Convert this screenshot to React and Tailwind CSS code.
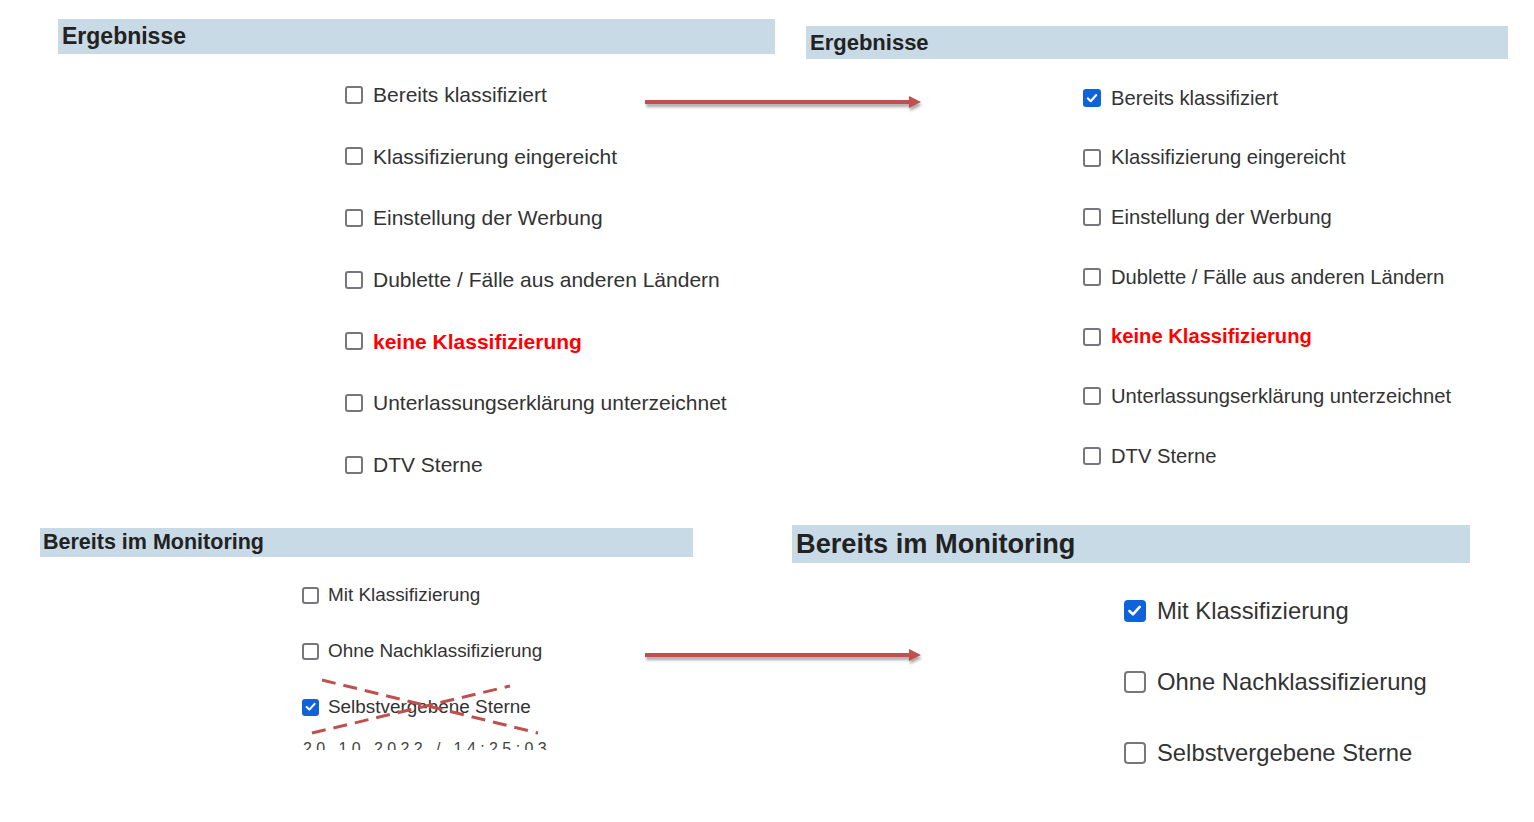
import React from "react";

const font = { fontFamily: '"Liberation Sans", Arial, sans-serif' };

const Checkbox = ({ checked, size }) => {
  // size: box edge in px
  const cls =
    size === "lg"
      ? "w-[22px] h-[22px] rounded-[4px]"
      : size === "sm"
      ? "w-[17px] h-[17px] rounded-[3px]"
      : "w-[18px] h-[18px] rounded-[3px]";
  if (checked) {
    return (
      <span className={`${cls} shrink-0 bg-[#0f62d8] flex items-center justify-center`}>
        <svg viewBox="0 0 16 16" className="w-[78%] h-[78%]">
          <path
            d="M3.2 8.4 L6.5 11.6 L12.8 4.6"
            fill="none"
            stroke="white"
            strokeWidth="2.4"
            strokeLinecap="round"
            strokeLinejoin="round"
          />
        </svg>
      </span>
    );
  }
  return <span className={`${cls} shrink-0 border-2 border-[#76767e] bg-white`} />;
};

const Arrow = ({ className }) => (
  <svg className={className} width="290" height="24" viewBox="0 0 290 24">
    <defs>
      <filter id="sh" x="-5%" y="-50%" width="110%" height="200%">
        <feGaussianBlur in="SourceAlpha" stdDeviation="1.5" />
        <feOffset dx="1" dy="3" result="o" />
        <feComponentTransfer>
          <feFuncA type="linear" slope="0.35" />
        </feComponentTransfer>
        <feMerge>
          <feMergeNode />
          <feMergeNode in="SourceGraphic" />
        </feMerge>
      </filter>
    </defs>
    <g filter="url(#sh)">
      <rect x="0" y="8" width="266" height="4" fill="#c0504d" />
      <path d="M264 4 L276 10 L264 16 Z" fill="#c0504d" />
    </g>
  </svg>
);

const Header = ({ title, className, textClass }) => (
  <div className={`bg-[#c8dae5] flex items-center ${className}`}>
    <span className={`font-bold text-[#222] ${textClass}`}>{title}</span>
  </div>
);

const List = ({ items, rowClass, textClass, size, className }) => (
  <div className={className}>
    {items.map((it) => (
      <div key={it.label} className={`flex items-center ${rowClass}`}>
        <Checkbox checked={it.checked} size={size} />
        <span
          className={`${textClass} ${
            it.red ? "text-[#ff0000] font-bold" : "text-[#333]"
          } whitespace-nowrap`}
        >
          {it.label}
        </span>
      </div>
    ))}
  </div>
);

const ergebnisse = [
  "Bereits klassifiziert",
  "Klassifizierung eingereicht",
  "Einstellung der Werbung",
  "Dublette / Fälle aus anderen Ländern",
  "keine Klassifizierung",
  "Unterlassungserklärung unterzeichnet",
  "DTV Sterne",
];

export default function App() {
  const leftTop = ergebnisse.map((l) => ({ label: l, red: l === "keine Klassifizierung" }));
  const rightTop = ergebnisse.map((l, i) => ({
    label: l,
    red: l === "keine Klassifizierung",
    checked: i === 0,
  }));

  return (
    <div className="relative w-[1534px] h-[822px] bg-white overflow-hidden" style={font}>
      {/* top row */}
      <div className="flex items-start h-[500px]">
        <div className="ml-[58px] mt-[19px] w-[717px]">
          <Header title="Ergebnisse" className="h-[35px] pl-[4px]" textClass="text-[23px]" />
          <List
            items={leftTop}
            className="pl-[287px] mt-[10px]"
            rowClass="h-[61.67px] gap-[10px]"
            textClass="text-[21px]"
          />
        </div>
        <div className="ml-[31px] mt-[26px] w-[702px]">
          <Header title="Ergebnisse" className="h-[33px] pl-[4px]" textClass="text-[22px]" />
          <List
            items={rightTop}
            className="pl-[277px] mt-[9px]"
            rowClass="h-[59.7px] gap-[10px]"
            textClass="text-[20.2px]"
          />
        </div>
      </div>

      {/* bottom row */}
      <div className="flex items-start">
        <div className="ml-[40px] mt-[28px] w-[653px]">
          <Header
            title="Bereits im Monitoring"
            className="h-[29px] pl-[3px]"
            textClass="text-[21.5px]"
          />
          <List
            items={[
              { label: "Mit Klassifizierung" },
              { label: "Ohne Nachklassifizierung" },
              { label: "Selbstvergebene Sterne", checked: true },
            ]}
            className="pl-[262px] mt-[10px]"
            rowClass="h-[56px] gap-[9px]"
            textClass="text-[18.9px]"
            size="sm"
          />
          <div className="ml-[263px] mt-[6px] h-[9px] overflow-hidden">
            <div className="text-[16px] leading-none tracking-[4.4px] text-[#444] whitespace-nowrap">
              20.10.2022 / 14:25:03
            </div>
          </div>
        </div>
        <div className="ml-[99px] mt-[25px] w-[678px]">
          <Header
            title="Bereits im Monitoring"
            className="h-[38px] pl-[4px]"
            textClass="text-[27.2px]"
          />
          <List
            items={[
              { label: "Mit Klassifizierung", checked: true },
              { label: "Ohne Nachklassifizierung" },
              { label: "Selbstvergebene Sterne" },
            ]}
            className="pl-[332px] mt-[12.5px]"
            rowClass="h-[71px] gap-[11px]"
            textClass="text-[23.8px]"
            size="lg"
          />
        </div>
      </div>

      {/* overlays: arrows and crossed-out mark */}
      <Arrow className="absolute left-[645px] top-[92px]" />
      <Arrow className="absolute left-[645px] top-[645px]" />
      <svg className="absolute left-0 top-0 pointer-events-none" width="1534" height="822">
        <line
          x1="322" y1="680" x2="538" y2="733"
          stroke="#c0504d" strokeWidth="3" strokeDasharray="14 8"
        />
        <line
          x1="312" y1="733" x2="510" y2="686"
          stroke="#c0504d" strokeWidth="3" strokeDasharray="14 8"
        />
      </svg>
    </div>
  );
}
